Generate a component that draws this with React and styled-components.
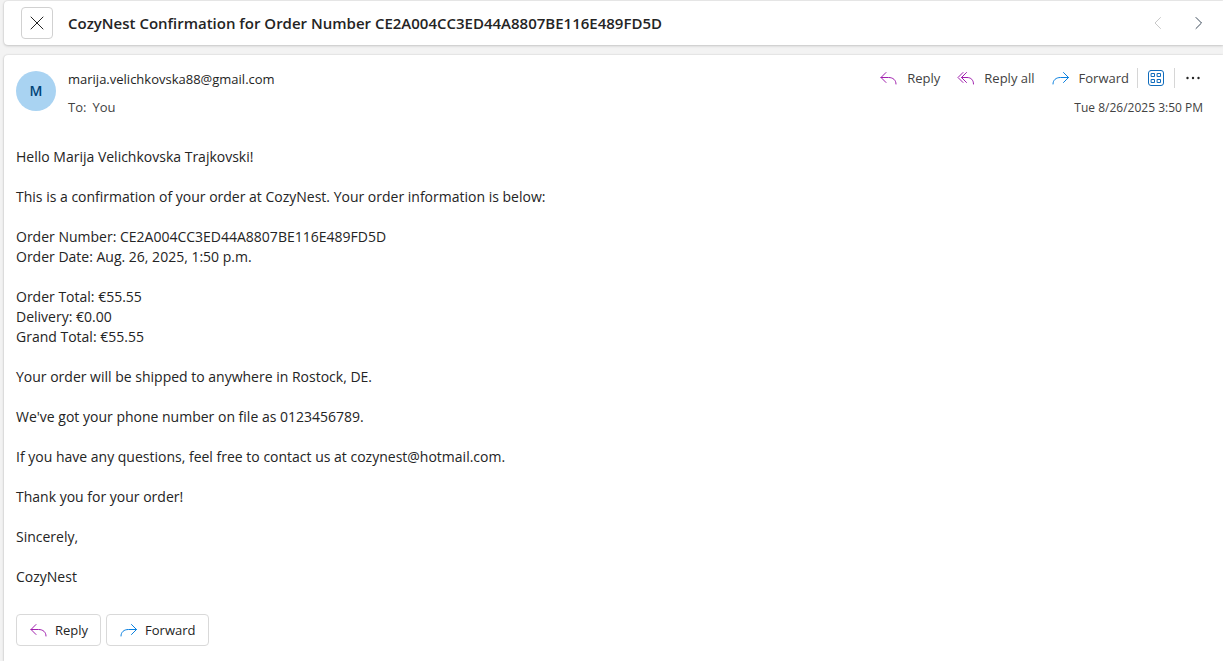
import React from "react";
import styled, { createGlobalStyle } from "styled-components";

const GlobalStyle = createGlobalStyle`
  *, *::before, *::after { box-sizing: border-box; }
  html, body, #root { height: 100%; }
  body {
    margin: 0;
    background: #f3f3f3;
    color: #242424;
    font-family: "Segoe UI", "Open Sans", "Noto Sans", sans-serif;
    font-size: 14px;
    line-height: 20px;
  }
  button { font: inherit; color: inherit; cursor: pointer; }
`;

const Page = styled.div`
  display: flex;
  flex-direction: column;
  gap: 10px;
  min-height: 100%;
  padding: 1px 0 0 4px;
  overflow: hidden;
`;

const Card = styled.div`
  background: #ffffff;
  border-radius: 4px 0 0 4px;
  box-shadow: 0 0 2px rgba(0, 0, 0, 0.14), 0 1px 3px rgba(0, 0, 0, 0.16);
`;

const SubjectBar = styled(Card).attrs({ as: "header" })`
  display: flex;
  align-items: center;
  gap: 15px;
  height: 44px;
  padding: 0 14px 0 17px;
`;

const CloseButton = styled.button`
  display: grid;
  place-items: center;
  width: 32px;
  height: 32px;
  padding: 0;
  background: #ffffff;
  border: 1px solid #d1d1d1;
  border-radius: 4px;
`;

const Subject = styled.h1`
  flex: 1;
  margin: 0;
  font-size: 15px;
  font-weight: 600;
  line-height: 22px;
  white-space: nowrap;
`;

const Pager = styled.nav`
  display: flex;
  gap: 21px;
`;

const PagerButton = styled.button`
  display: grid;
  padding: 0;
  background: none;
  border: 0;
  color: ${(p) => (p.disabled ? "#c8c8c8" : "#3b4a5a")};
`;

const Message = styled(Card).attrs({ as: "article" })`
  flex: 1;
  padding: 12px 20px 15px 12px;
  border-radius: 4px 0 0 0;
`;

const MessageHeader = styled.header`
  display: flex;
  gap: 12px;
  height: 64px;
`;

const Avatar = styled.div`
  display: grid;
  place-items: center;
  width: 40px;
  height: 40px;
  margin-top: 4px;
  border-radius: 50%;
  background: #a9d3f2;
  color: #004377;
  font-weight: 600;
`;

const People = styled.div`
  display: flex;
  flex: 1;
  flex-direction: column;
  gap: 8px;
  padding-top: 2px;
  font-size: 13px;
`;

const Recipients = styled.div`
  display: flex;
  gap: 6px;
  color: #424242;
`;

const Side = styled.div`
  display: flex;
  flex-direction: column;
  align-items: flex-end;
  gap: 9px;
`;

const Toolbar = styled.div`
  display: flex;
  align-items: center;
  height: 22px;
  color: #424242;
`;

const ToolButton = styled.button`
  display: flex;
  align-items: center;
  gap: 8px;
  padding: 0;
  margin-right: ${(p) => p.$after}px;
  background: none;
  border: 0;
  font-size: 13px;
`;

const Divider = styled.span`
  width: 1px;
  height: 20px;
  margin-right: 8px;
  background: #d6d6d6;
`;

const Time = styled.time`
  color: #424242;
  font-size: 12px;
`;

const Body = styled.div`
  padding-top: 16px;
`;

const Paragraph = styled.p`
  margin: 0 0 20px;
`;

const Actions = styled.footer`
  display: flex;
  gap: 5px;
  padding-top: 7px;
`;

const ActionButton = styled.button`
  display: flex;
  align-items: center;
  gap: 6px;
  height: 32px;
  padding: 0 12px;
  background: #ffffff;
  border: 1px solid #d9d9d9;
  border-radius: 4px;
  font-size: 13px;
`;

const Icon = ({ color = "currentColor", children }) => (
  <svg
    width="20"
    height="20"
    viewBox="0 0 20 20"
    fill="none"
    stroke={color}
    strokeLinecap="round"
    strokeLinejoin="round"
    aria-hidden="true"
  >
    {children}
  </svg>
);

const ReplyIcon = () => (
  <Icon color="#a01fae">
    <path d="M7 4.5l-5 5 5 5M2 9.5h7.500c4.500 0 7.500 2.500 7.500 6.500" />
  </Icon>
);

const ReplyAllIcon = () => (
  <Icon color="#a01fae">
    <path d="M7 4.500l-5 5 5 5M10.500 4.500l-5 5 5 5M5.500 9.500H11c4 0 6.500 2.500 6.500 6.500" />
  </Icon>
);

const ForwardIcon = () => (
  <Icon color="#0a80e0">
    <path d="M12.500 4.500l5 5-5 5M17.500 9.500H9.500C5 9.500 2 12 2 16" />
  </Icon>
);

const AppsIcon = () => (
  <Icon color="#0f6cbd">
    <rect x="2.500" y="2.500" width="15" height="15" rx="2.500" />
    <path strokeLinejoin="miter" d="M5.500 5.500h3v3h-3zM11.500 5.500h3v3h-3zM5.500 11.500h3v3h-3zM11.500 11.500h3v3h-3z" />
  </Icon>
);

const paragraphs = [
  ["Hello Marija Velichkovska Trajkovski!"],
  ["This is a confirmation of your order at CozyNest. Your order information is below:"],
  ["Order Number: CE2A004CC3ED44A8807BE116E489FD5D", "Order Date: Aug. 26, 2025, 1:50 p.m."],
  ["Order Total: €55.55", "Delivery: €0.00", "Grand Total: €55.55"],
  ["Your order will be shipped to anywhere in Rostock, DE."],
  ["We've got your phone number on file as 0123456789."],
  ["If you have any questions, feel free to contact us at cozynest@hotmail.com."],
  ["Thank you for your order!"],
  ["Sincerely,"],
  ["CozyNest"],
];

export default function App() {
  return (
    <>
      <GlobalStyle />
      <Page>
        <SubjectBar>
          <CloseButton aria-label="Close">
            <Icon>
              <path d="M4 4l12 12M16 4L4 16" />
            </Icon>
          </CloseButton>
          <Subject>CozyNest Confirmation for Order Number CE2A004CC3ED44A8807BE116E489FD5D</Subject>
          <Pager>
            <PagerButton disabled aria-label="Previous message">
              <Icon>
                <path d="M12.500 4.500 7 10l5.500 5.500" />
              </Icon>
            </PagerButton>
            <PagerButton aria-label="Next message">
              <Icon>
                <path d="M7 4.500l5.500 5.500L7 15.500" />
              </Icon>
            </PagerButton>
          </Pager>
        </SubjectBar>
        <Message>
          <MessageHeader>
            <Avatar>M</Avatar>
            <People>
              <span>marija.velichkovska88@gmail.com</span>
              <Recipients>
                <span>To:</span>
                <span>You</span>
              </Recipients>
            </People>
            <Side>
              <Toolbar>
                <ToolButton $after={16}>
                  <ReplyIcon />
                  Reply
                </ToolButton>
                <ToolButton $after={16}>
                  <ReplyAllIcon />
                  Reply all
                </ToolButton>
                <ToolButton $after={8}>
                  <ForwardIcon />
                  Forward
                </ToolButton>
                <Divider />
                <ToolButton $after={8} aria-label="Apps">
                  <AppsIcon />
                </ToolButton>
                <Divider />
                <ToolButton $after={0} aria-label="More actions">
                  <Icon>
                    <g fill="#242424" stroke="none">
                      <circle cx="4.500" cy="10" r="1.200" />
                      <circle cx="10" cy="10" r="1.200" />
                      <circle cx="15.500" cy="10" r="1.200" />
                    </g>
                  </Icon>
                </ToolButton>
              </Toolbar>
              <Time dateTime="2025-08-26T15:50">Tue 8/26/2025 3:50 PM</Time>
            </Side>
          </MessageHeader>
          <Body>
            {paragraphs.map((group) => (
              <Paragraph key={group[0]}>
                {group.map((line, i) => (
                  <React.Fragment key={line}>
                    {i > 0 && <br />}
                    {line}
                  </React.Fragment>
                ))}
              </Paragraph>
            ))}
          </Body>
          <Actions>
            <ActionButton>
              <ReplyIcon />
              Reply
            </ActionButton>
            <ActionButton>
              <ForwardIcon />
              Forward
            </ActionButton>
          </Actions>
        </Message>
      </Page>
    </>
  );
}
